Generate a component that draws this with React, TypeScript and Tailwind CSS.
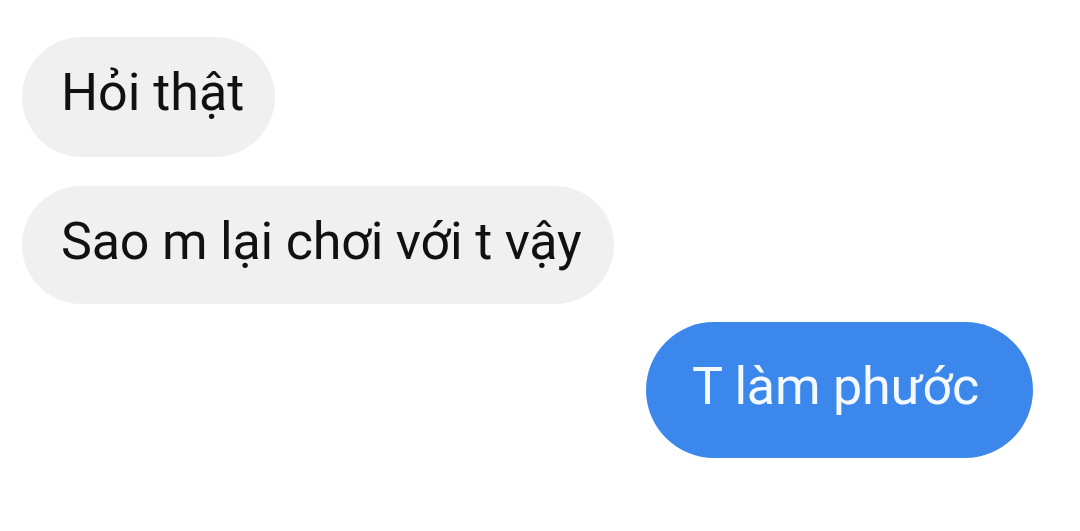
const font = { fontFamily: "Roboto, 'Noto Sans', sans-serif" }

const App = () => {
  return (
    <div className="w-[1080px] h-[531px] bg-white overflow-hidden" style={font}>
      <div className="flex flex-col pt-[37px] pl-[22px] pr-[47px]">
        <div className="self-start h-[120px] rounded-full bg-[#f0f0f0] pl-[39px] pr-[31px] flex items-center">
          <span className="text-[52px] leading-none text-[#111111] -mt-[8px]">Hỏi thật</span>
        </div>
        <div className="self-start mt-[29px] h-[118px] rounded-full bg-[#f0f0f0] pl-[39px] pr-[33px] flex items-center">
          <span className="text-[52px] leading-none tracking-[-0.2px] text-[#111111] -mt-[6px]">Sao m lại chơi với t vậy</span>
        </div>
        <div className="self-end mt-[18px] h-[136px] rounded-full bg-[#3b87eb] pl-[46px] pr-[54px] flex items-center">
          <span className="text-[52px] leading-none tracking-[-0.2px] text-[#f4f9ff] -mt-[6px]">T làm phước</span>
        </div>
      </div>
    </div>
  )
}

export default App
